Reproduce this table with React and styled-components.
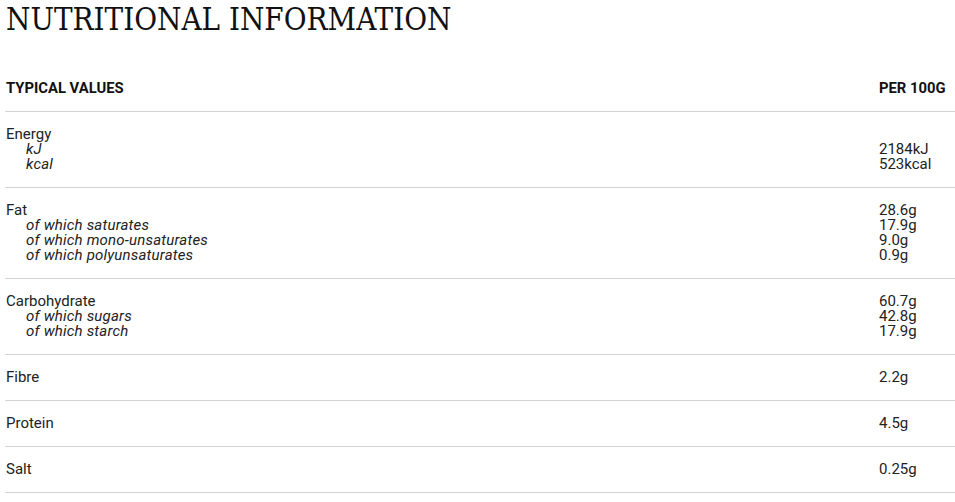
import React from "react";
import styled, { createGlobalStyle } from "styled-components";

const Global = createGlobalStyle`
  html, body { margin: 0; padding: 0; background: #fff; }
  body { font-family: Roboto, "Liberation Sans", sans-serif; color: #222; }
`;

const Page = styled.div`
  padding: 0 0 0 5px;
`;

const Title = styled.h1`
  margin: 0;
  padding: 0 0 0 1px;
  font-family: "DejaVu Serif Condensed", "DejaVu Serif", serif;
  font-weight: 400;
  font-size: 31px;
  line-height: 38px;
  color: #111;
`;

const Table = styled.div`
  margin-top: 25px;
  display: flex;
  flex-direction: column;
`;

const Row = styled.div`
  display: grid;
  grid-template-columns: 1fr 77px;
  padding: 15px 0;
  border-bottom: 1px solid #d3d3d3;
  font-size: 15px;
  line-height: 15px;
`;

const HeadRow = styled(Row)`
  padding: 18px 0 15px;
  font-weight: 700;
  font-size: 14.8px;
  color: #111;
`;

const Cell = styled.div`
  padding: 0 1px;
  display: flex;
  flex-direction: column;
  justify-content: ${(p) => (p.$bottom ? "flex-end" : "flex-start")};
`;

const Line = styled.div`
  white-space: nowrap;
  padding-left: ${(p) => (p.$sub ? "20px" : "0")};
  font-style: ${(p) => (p.$sub ? "italic" : "normal")};
  letter-spacing: ${(p) => (p.$sub ? "0.2px" : "0")};
`;

const rows = [
  { label: "Energy", subs: ["kJ", "kcal"], values: ["2184kJ", "523kcal"], bottom: true },
  {
    label: "Fat",
    subs: ["of which saturates", "of which mono-unsaturates", "of which polyunsaturates"],
    values: ["28.6g", "17.9g", "9.0g", "0.9g"],
  },
  { label: "Carbohydrate", subs: ["of which sugars", "of which starch"], values: ["60.7g", "42.8g", "17.9g"] },
  { label: "Fibre", subs: [], values: ["2.2g"] },
  { label: "Protein", subs: [], values: ["4.5g"] },
  { label: "Salt", subs: [], values: ["0.25g"] },
];

export default function App() {
  return (
    <Page>
      <Global />
      <Title>NUTRITIONAL INFORMATION</Title>
      <Table>
        <HeadRow>
          <Cell>TYPICAL VALUES</Cell>
          <Cell>PER 100G</Cell>
        </HeadRow>
        {rows.map((r) => (
          <Row key={r.label}>
            <Cell>
              <Line>{r.label}</Line>
              {r.subs.map((s) => (
                <Line $sub key={s}>{s}</Line>
              ))}
            </Cell>
            <Cell $bottom={r.bottom}>
              {r.values.map((v, i) => (
                <Line key={i}>{v}</Line>
              ))}
            </Cell>
          </Row>
        ))}
      </Table>
    </Page>
  );
}
